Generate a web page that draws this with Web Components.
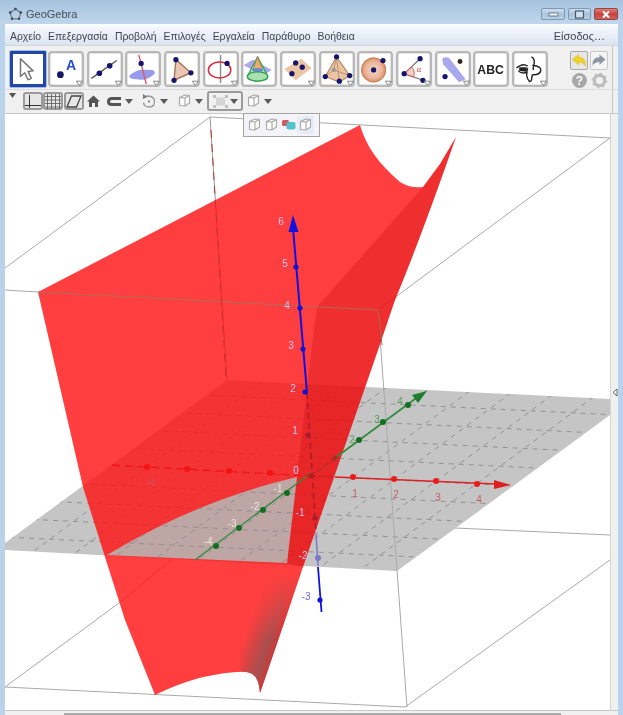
<!DOCTYPE html>
<html lang="el">
<head>
<meta charset="utf-8">
<title>GeoGebra</title>
<style>
  html, body { margin: 0; height: 100%; overflow: hidden; background: #b9d3ec; }
</style>
</head>
<body>
<gg-window>
  <gg-titlebar>GeoGebra</gg-titlebar>
  <gg-menubar>
    <span>Αρχείο</span><span>Επεξεργασία</span><span>Προβολή</span><span>Επιλογές</span><span>Εργαλεία</span><span>Παράθυρο</span><span>Βοήθεια</span>
    <span slot="end">Είσοδος…</span>
  </gg-menubar>
  <gg-toolbar>
    <gg-tool icon="move" selected></gg-tool>
    <gg-tool icon="point" menu></gg-tool>
    <gg-tool icon="line" menu></gg-tool>
    <gg-tool icon="perp" menu></gg-tool>
    <gg-tool icon="triangle" menu></gg-tool>
    <gg-tool icon="circle" menu></gg-tool>
    <gg-tool icon="cone"></gg-tool>
    <gg-tool icon="plane" menu></gg-tool>
    <gg-tool icon="pyramid" menu></gg-tool>
    <gg-tool icon="sphere" menu></gg-tool>
    <gg-tool icon="angle" menu></gg-tool>
    <gg-tool icon="reflect" menu></gg-tool>
    <gg-tool icon="abc"></gg-tool>
    <gg-tool icon="rotate" menu></gg-tool>
    <gg-actions slot="end"></gg-actions>
  </gg-toolbar>
  <gg-stylebar>
    <gg-style-btn icon="fold" width="7" gap="7"></gg-style-btn>
    <gg-style-btn icon="axes" width="20" pressed></gg-style-btn>
    <gg-style-btn icon="grid" width="20" gap="1" pressed></gg-style-btn>
    <gg-style-btn icon="para" width="20" gap="3" pressed></gg-style-btn>
    <gg-style-btn icon="home" width="13" gap="6"></gg-style-btn>
    <gg-style-btn icon="clip" width="27" gap="7" menu></gg-style-btn>
    <gg-style-btn icon="spin" width="28" gap="8" menu></gg-style-btn>
    <gg-style-btn icon="cube" width="27" gap="4" menu></gg-style-btn>
    <gg-style-btn icon="dots" width="36" gap="2" menu pressed></gg-style-btn>
    <gg-style-btn icon="cube" width="27" menu></gg-style-btn>
    <gg-popup></gg-popup>
  </gg-stylebar>
  <gg-main>
    <gg-view3d></gg-view3d>
  </gg-main>
</gg-window>

<script>
window.customElements.define('gg-window', class extends HTMLElement {
  constructor() {
    super();
    this.attachShadow({ mode: 'open' }).innerHTML = `<style>
  :host {
    display: flex;
    flex-direction: column;
    width: 623px;
    height: 715px;
    box-sizing: border-box;
    padding: 0 5px 0 5px;
    overflow: hidden;
    background: linear-gradient(#a6c3df 0, #c0d6ec 24px, #b9d3ec 24px);
    font-family: "Liberation Sans", sans-serif;
    filter: blur(.5px);
  }
</style>
<slot></slot>`;
  }
});

window.customElements.define('gg-titlebar', class extends HTMLElement {
  constructor() {
    super();
    this.attachShadow({ mode: 'open' }).innerHTML = `<style>
  :host {
    display: flex;
    align-items: center;
    flex: none;
    height: 24px;
    margin-right: -5px;
    padding: 4px 0 0 3px;
    box-sizing: border-box;
    font-size: 11px;
    color: #454e58;
  }
  svg.logo { margin-right: 3px; }
  .buttons { display: flex; gap: 3px; margin-left: auto; padding-right: 5px; }
  .buttons div {
    display: grid;
    place-items: center;
    width: 24px;
    height: 12px;
    border: 1px solid #7d97b0;
    border-radius: 2px;
    box-sizing: border-box;
    background: linear-gradient(#cfe0f0, #a9c3da 50%, #b8d0e6);
  }
  .buttons div:nth-child(2) { width: 23px; }
  .buttons .close { background: linear-gradient(#e0807a, #c8433c 50%, #d3625a); border-color: #8c4a48; }
</style>
<svg class="logo" width="15" height="15" viewBox="0 0 15 15">
  <path d="M7.5 2 L12.8 5.6 L11 11.8 L4 11.8 L2.2 5.6 Z" fill="none" stroke="#75808c" stroke-width="1.3"/>
  <circle cx="7.5" cy="2" r="1.3" fill="#3d4a58"/><circle cx="12.8" cy="5.6" r="1.3" fill="#3d4a58"/>
  <circle cx="11" cy="11.8" r="1.3" fill="#3d4a58"/><circle cx="4" cy="11.8" r="1.3" fill="#3d4a58"/>
  <circle cx="2.2" cy="5.6" r="1.3" fill="#3d4a58"/>
</svg>
<slot></slot>
<div class="buttons">
  <div><svg width="11" height="5"><rect x="1" y="1" width="9" height="3" fill="#eef4fa" stroke="#55687a" stroke-width=".8"/></svg></div>
  <div><svg width="11" height="9"><rect x="1.5" y="1" width="8" height="7" fill="#cfe0ef" stroke="#44576a" stroke-width="1.2"/></svg></div>
  <div class="close"><svg width="10" height="9"><path d="M2 1.5 L8 7.5 M8 1.5 L2 7.5" stroke="#fff" stroke-width="2"/></svg></div>
</div>`;
  }
});

window.customElements.define('gg-menubar', class extends HTMLElement {
  constructor() {
    super();
    this.attachShadow({ mode: 'open' }).innerHTML = `<style>
  :host {
    display: flex;
    align-items: center;
    flex: none;
    height: 22px;
    padding: 3px 13px 0 5px;
    box-sizing: border-box;
    gap: 7px;
    font-size: 10.4px;
    color: #3d4650;
    border-bottom: 1px solid #cfd6de;
    background: linear-gradient(#fff 0, #f3f7fb 4px, #d9e4f1 100%);
  }
  .end { margin-left: auto; font-size: 11px; }
</style>
<slot></slot><div class="end"><slot name="end"></slot></div>`;
  }
});

const DOT = '#15156e';
const dot = (x, y, r = 2.8, fill = DOT) => `<circle cx="${x}" cy="${y}" r="${r}" fill="${fill}"/>`;
const TOOL_ICONS = {
  move: `<path d="M9.5 5 L9.5 24 L14 20 L17.5 27.5 L21 26 L17.5 18.6 L23 18 Z" fill="#fff" stroke="#777" stroke-width="1.6" stroke-linejoin="round"/>`,
  point: `${dot(11.5, 22, 3.6)}<text x="23" y="17" text-anchor="middle" font-size="15" font-weight="bold" fill="#2250c8">A</text>`,
  line: `<path d="M3 26 L30 7" stroke="#555" stroke-width="1.4"/>${dot(11.5, 20.5, 3)}${dot(22.5, 12.5, 3)}`,
  perp: `<path d="M3 23 Q12 15 22 17 Q31 16 30 21 Q22 29 11 27 Q2 27 3 23Z" fill="#9a9aec"/><path d="M13 1 L21 32" stroke="#d85a6a" stroke-width="1.5"/>${dot(15.5, 10, 2.8)}`,
  triangle: `<path d="M11 6 L27 20 L9 28 Z" fill="#ecc6b4" stroke="#a4775a" stroke-width="1.5"/>${dot(11, 6)}${dot(27, 20)}${dot(9, 28)}`,
  circle: `<path d="M17 1 L17 31" stroke="#888" stroke-width="1.5"/><ellipse cx="16" cy="17" rx="12" ry="8.5" fill="none" stroke="#d92b3a" stroke-width="1.6"/>${dot(24, 10)}`,
  cone: `<path d="M1 12 L11 6 L31 17 L22 23Z" fill="#a8a8ec"/><path d="M16 3 L27 24 A11 5 0 0 1 5 24Z" fill="#a8e0b0" stroke="#2e9e4e" stroke-width="1.2"/><path d="M16 3 L21 17 L11 17Z" fill="#e8b070" stroke="#c26a4a" stroke-width=".8"/><ellipse cx="16" cy="17" rx="6" ry="2" fill="#6a8ad8"/><ellipse cx="16" cy="24" rx="11" ry="5" fill="none" stroke="#2e9e4e" stroke-width="1.2"/>`,
  plane: `<path d="M3 16 L21 5 L32 15 L15 28Z" fill="#ecc6a4"/>${dot(15, 9.5)}${dot(11, 21)}${dot(22, 14)}`,
  pyramid: `<path d="M17 3 L31 23 L20 30 L5 24Z" fill="#ecc4a2" stroke="#b08a6a" stroke-width="1.2"/><path d="M17 3 L20 30 M17 3 L14 17 M5 24 L14 17 L31 23" fill="none" stroke="#b08a6a" stroke-width=".9"/>${dot(17, 3)}${dot(31, 23)}${dot(20, 29)}${dot(5, 24)}<circle cx="14" cy="17" r="2.3" fill="#999"/>`,
  sphere: `<defs><radialGradient id="sph"><stop offset="0" stop-color="#f4d8c8"/><stop offset=".7" stop-color="#eab49a"/><stop offset="1" stop-color="#d88a60"/></radialGradient></defs><circle cx="16" cy="17" r="13" fill="url(#sph)" stroke="#c77a4a"/>${dot(16, 17)}${dot(26, 7)}`,
  angle: `<path d="M24 5 L7 21 L27 28" fill="none" stroke="#777" stroke-width="1.3"/><path d="M15 14 A10 10 0 0 1 17 24.5 L7 21Z" fill="#f2cfc4" stroke="#d25050" stroke-width="1"/><text x="20.5" y="19" font-size="8" fill="#e03030">α</text>${dot(24, 5)}${dot(7, 21)}${dot(27, 28)}`,
  reflect: `<path d="M6 5 Q10 2 14 5 L31 27 L24 30 L7 11Z" fill="#a8a8ec"/>${dot(25, 8, 2.6, '#3a2020')}${dot(9, 24)}`,
  abc: `<text x="17" y="21" text-anchor="middle" font-size="13" font-weight="bold" fill="#222">ABC</text>`,
  rotate: `<path d="M3 15 Q10 9 15 13 M15 19 Q9 22 5 18 M19 3 Q24 5 21 14 L21 17 M17 29 Q12 25 15 15 M20 12 Q30 13 29 18 Q27 23 20 22 M20 22 L19 28 Q18 30 16 29" fill="none" stroke="#222" stroke-width="1.5"/><path d="M6 14 L14 14 L14 19 L6 18Z" fill="#222"/>`,
};

const RIGHT_RULE = 'linear-gradient(90deg, #f0f0f0 607px, #c6c6c6 607px, #c6c6c6 608px, #f0f0f0 608px)';

window.customElements.define('gg-toolbar', class extends HTMLElement {
  constructor() {
    super();
    this.attachShadow({ mode: 'open' }).innerHTML = `<style>
  :host {
    display: flex;
    flex: none;
    height: 44px;
    padding: 5px 10px 0 4.5px;
    box-sizing: border-box;
    gap: 2.65px;
    background: ${RIGHT_RULE};
    border-bottom: 1px solid #dcdcdc;
  }
  .end { margin-left: auto; }
</style>
<slot></slot><div class="end"><slot name="end"></slot></div>`;
  }
});

window.customElements.define('gg-tool', class extends HTMLElement {
  constructor() {
    super();
    this.attachShadow({ mode: 'open' }).innerHTML = `<style>
  :host {
    display: block;
    flex: none;
    width: 36px;
    height: 36px;
    box-sizing: border-box;
    padding: 1px;
    border: 2px solid #b8b8b8;
    border-radius: 4px;
    background: #e4e4e4;
    font-family: "Liberation Sans", sans-serif;
  }
  :host([selected]) {
    padding: 0;
    border: 3px solid #2447a6;
    border-radius: 1px;
    background: #fff;
    box-shadow: 0 0 0 1px #9fc0e4;
  }
  svg { display: block; width: 30px; height: 30px; background: #fff; overflow: visible; }
</style>
<svg viewBox="1.5 0 32 32"></svg>`;
    this.svg = this.shadowRoot.querySelector('svg');
  }

  connectedCallback() {
    const arrow = this.hasAttribute('menu')
      ? '<path d="M28.5 29 L35 29 L31.7 33.5 Z" fill="#fff" stroke="#808080" stroke-width="1"/>'
      : '';
    this.svg.innerHTML = TOOL_ICONS[this.getAttribute('icon')] + arrow;
  }
});

window.customElements.define('gg-actions', class extends HTMLElement {
  constructor() {
    super();
    this.attachShadow({ mode: 'open' }).innerHTML = `<style>
  :host {
    display: grid;
    grid-template-columns: 18px 18px;
    gap: 2px 2px;
    justify-items: center;
  }
  .btn { width: 18px; height: 19px; box-sizing: border-box; border: 1px solid #c8c8c8; border-radius: 2px; background: #f4f4f4; }
  .btn.on { background: #e6e6e6; border-color: #a8a8a8; }
  svg { display: block; }
</style>
<div class="btn on"><svg width="16" height="17" viewBox="0 0 17 17"><path d="M1.5 7.5 L8 2 L8 5 Q16 5 15.5 14 Q13 10 8 10 L8 13 Z" fill="#f2d325" stroke="#d8b61c" stroke-width=".6"/></svg></div>
<div class="btn"><svg width="16" height="17" viewBox="0 0 17 17"><path d="M15.5 7.5 L9 2 L9 5 Q1 5 1.5 14 Q4 10 9 10 L9 13 Z" fill="#8d98a4"/></svg></div>
<svg width="17" height="17" viewBox="0 0 17 17"><circle cx="8.5" cy="8.5" r="7.5" fill="#a8a8a8"/><text x="8.5" y="13" text-anchor="middle" font-size="12" font-weight="bold" fill="#fff" font-family="Liberation Sans, sans-serif">?</text></svg>
<svg width="17" height="17" viewBox="0 0 17 17"><circle cx="8.5" cy="8.5" r="5.2" fill="none" stroke="#bcbcbc" stroke-width="3.2"/><circle cx="8.5" cy="8.5" r="7" fill="none" stroke="#c4c4c4" stroke-width="1.8" stroke-dasharray="2.4 3.1"/></svg>`;
  }
});

const CUBE = (stroke = '#a8a8a8') => `<path d="M3.5 5.5 L9 3 L13.5 3.5 L13.5 11 L9 14 L3.5 13.5 Z M3.5 5.5 L9 6 L13.5 3.5 M9 6 L9 14" fill="#fbfbfb" stroke="${stroke}" stroke-width="1.1" stroke-linejoin="round"/>`;
const STYLE_ICONS = {
  fold: `<path d="M0 1 L7 1 L3.5 6Z" fill="#555"/>`,
  axes: `<path d="M4.5 1 L4.5 14 M0 11.5 L16 11.5" stroke="#333" stroke-width="1"/>`,
  grid: `<path d="M2.5 0V15M6.5 0V15M10.5 0V15M14.5 0V15M0 2.5H16M0 6H16M0 9.5H16M0 13H16" stroke="#555" stroke-width=".8"/>`,
  para: `<path d="M1 13 L5.5 2 L15 2 L10.5 13Z" fill="none" stroke="#444" stroke-width="1.3"/>`,
  home: `<path d="M6.5 3.5 L13 9.5 L11 9.5 L11 15 L8 15 L8 11 L5 11 L5 15 L2 15 L2 9.5 L0 9.5Z" fill="#555"/>`,
  clip: `<path d="M15 6.5 L6 6.5 Q2.5 6.5 2.5 9.5 Q2.5 12.5 6 12.5 L15 12.5" fill="none" stroke="#555" stroke-width="3"/>`,
  spin: `<path d="M4 4.5 L8 4 Q14.5 4.5 14.5 9.5 Q14.5 15 9 15 Q4 15 3.5 10.5" fill="none" stroke="#999" stroke-width="1.4"/><path d="M3 2 L7 5 L3 7Z" fill="#777"/><circle cx="9" cy="9.5" r="1" fill="#666"/>`,
  cube: `<g>${CUBE()}</g>`,
  dots: `<rect x="5" y="3.5" width="9" height="8" fill="#d4d4d4"/><g fill="#c0c0c0"><rect x="2" y="1" width="3" height="3"/><rect x="14" y="1" width="3" height="3"/><rect x="2" y="11" width="3" height="3"/><rect x="14" y="11" width="3" height="3"/></g>`,
};
const STYLE_BOX = { axes: [16, 15], grid: [16, 15], para: [16, 15], fold: [7, 18], home: [13, 18], clip: [17, 18], spin: [17, 18], cube: [17, 18], dots: [19, 15] };

window.customElements.define('gg-stylebar', class extends HTMLElement {
  constructor() {
    super();
    this.attachShadow({ mode: 'open' }).innerHTML = `<style>
  :host {
    display: flex;
    position: relative;
    align-items: center;
    flex: none;
    height: 24px;
    padding: 0 0 1px 4px;
    box-sizing: border-box;
    background: ${RIGHT_RULE};
    border-bottom: 1px solid #c9c9c9;
    z-index: 1;
  }
</style>
<slot></slot>`;
  }
});

window.customElements.define('gg-style-btn', class extends HTMLElement {
  constructor() {
    super();
    this.attachShadow({ mode: 'open' }).innerHTML = `<style>
  :host {
    display: flex;
    align-items: center;
    justify-content: space-between;
    flex: none;
    height: 18px;
    box-sizing: border-box;
  }
  :host([pressed]) {
    border: 2px solid #9a9a9a;
    border-radius: 3px;
    background: #e6e6e6;
  }
  :host([icon="dots"]) { padding: 0 4px 0 2px; height: 20px; background: #f0f0f0; }
  svg { display: block; flex: none; }
  .arrow { width: 8px; height: 5px; }
</style>`;
  }

  connectedCallback() {
    const name = this.getAttribute('icon');
    this.style.width = `${this.getAttribute('width')}px`;
    this.style.marginRight = `${this.getAttribute('gap') || 0}px`;
    const [w, h] = STYLE_BOX[name];
    const arrow = this.hasAttribute('menu')
      ? '<svg class="arrow" viewBox="0 0 8 5"><path d="M0 0 L8 0 L4 5Z" fill="#5a5a5a"/></svg>'
      : '';
    this.shadowRoot.innerHTML += `<svg width="${w}" height="${h}" viewBox="0 0 ${w} ${h}">${STYLE_ICONS[name]}</svg>${arrow}`;
  }
});

window.customElements.define('gg-popup', class extends HTMLElement {
  constructor() {
    super();
    this.attachShadow({ mode: 'open' }).innerHTML = `<style>
  :host {
    display: flex;
    position: absolute;
    left: 238px;
    top: 23px;
    width: 77px;
    height: 24px;
    box-sizing: border-box;
    align-items: center;
    padding-left: 2px;
    border: 1px solid #a4a4a4;
    background: #f4f4f8;
  }
  svg { display: block; width: 17px; height: 18px; flex: none; }
  .on { background: #e6ecf8; }
</style>
<svg viewBox="0 0 17 18">${CUBE()}</svg>
<svg viewBox="0 0 17 18">${CUBE()}</svg>
<svg viewBox="0 0 17 18"><rect x="2" y="4" width="7" height="6" rx="1.5" fill="#c95a62"/><rect x="6.5" y="6" width="9" height="7.5" rx="2" fill="#4fc4cc"/></svg>
<svg class="on" viewBox="0 0 17 18">${CUBE()}</svg>`;
  }
});

window.customElements.define('gg-main', class extends HTMLElement {
  constructor() {
    super();
    this.attachShadow({ mode: 'open' }).innerHTML = `<style>
  :host {
    display: flex;
    flex: 1;
    flex-direction: column;
    min-height: 0;
    background: #f0f0f0;
  }
  .row { display: flex; flex: 1; min-height: 0; }
  .side {
    display: flex;
    align-items: center;
    justify-content: center;
    flex: none;
    width: 8px;
    border-left: 1px solid #d4d4d4;
    box-sizing: border-box;
    padding: 0 0 40px;
  }
  .bottom { flex: none; height: 5px; border-top: 1px solid #c9c9c9; box-sizing: border-box; padding: 2px 57px 0 59px; }
  .bottom div { height: 3px; background: #a9a9a9; }
</style>
<div class="row">
  <slot></slot>
  <div class="side"><svg width="6" height="9" viewBox="0 0 6 9"><path d="M5 1 L1 4.5 L5 8Z" fill="#fff" stroke="#666"/></svg></div>
</div>
<div class="bottom"><div></div></div>`;
  }
});

window.customElements.define('gg-view3d', class extends HTMLElement {
  constructor() {
    super();

    const O = [311, 476];
    const ux = [41.3, 2];
    const uy = [24, -17.8];
    const at = (i, j) => `${O[0] + i * ux[0] + j * uy[0]} ${O[1] + i * ux[1] + j * uy[1]}`;
    let grid = '';
    for (let k = -7; k <= 7; k += 1) {
      grid += `<path d="M${at(-12, k)} L${at(12, k)}"/><path d="M${at(k, -12)} L${at(k, 12)}"/>`;
    }

    const surface = `M38 292 L360 125 C366 146 378 163 400 182 C408 187 416 188 423 187 L440 164 L456 137
      Q420 240 395 300 L378 350 L303 567 L285 620 L260 693 Q259 676 250 673 Q240 669 199 678 Q175 685 155 695
      L125 620 L105 557 L83 487 Z`;

    const label = (x, y, text, fill) => `<text x="${x}" y="${y}" fill="${fill}" text-anchor="middle">${text}</text>`;
    const zDots = [[296, 267], [300, 308], [303, 349], [305, 392], [320, 600]];

    this.attachShadow({ mode: 'open' }).innerHTML = `<style>
  :host {
    display: block;
    flex: 1;
    min-width: 0;
    background: #fff;
    overflow: hidden;
  }
  svg { display: block; width: 100%; height: 100%; font-family: "Liberation Sans", sans-serif; font-size: 10px; }
  .box { stroke: #a9a9a9; stroke-width: 1; fill: none; }
  .grid { stroke: #8c8c8c; stroke-width: .9; stroke-dasharray: 5 5; fill: none; }
</style>
<svg viewBox="5 114 605 596" preserveAspectRatio="none">
  <defs>
    <clipPath id="plane"><path d="M227 380 L610 399 L610 415 L397 571 L5 550 L5 543 Z"/></clipPath>
    <clipPath id="pink"><path d="M107 555 Q198 500 297 477 L287 563 Z"/></clipPath>
    <clipPath id="surface"><path d="${surface}"/></clipPath>
    <linearGradient id="shade" gradientUnits="userSpaceOnUse" x1="246" y1="632" x2="283" y2="644">
      <stop offset="0" stop-color="#a04a4a" stop-opacity="0"/>
      <stop offset=".62" stop-color="#a85050"/>
      <stop offset="1" stop-color="#e42a2a"/>
    </linearGradient>
    <linearGradient id="fade" gradientUnits="userSpaceOnUse" x1="0" y1="572" x2="0" y2="640">
      <stop offset="0" stop-color="#000"/>
      <stop offset="1" stop-color="#fff"/>
    </linearGradient>
    <mask id="shadeMask" maskUnits="userSpaceOnUse" x="240" y="564" width="80" height="136">
      <rect x="240" y="564" width="80" height="136" fill="url(#fade)"/>
    </mask>
  </defs>

  <path class="box" d="M5 268 L210 117 L610 138 L378 310 M5 687 L405 707 L610 560 M455 528 L610 535 M119 603 L171 560 M5 687 L119 603 M5 290 L38 292"/>
  <path d="M210 117 L227 380" stroke="#999" stroke-width="1" fill="none"/>

  <path d="M227 380 L610 399 L610 415 L397 571 L5 550 L5 543 Z" fill="#c5c5c5"/>
  <g clip-path="url(#plane)"><g class="grid">${grid}</g></g>

  <path d="M378 310 L407 707" class="box" stroke="#999"/>

  <path d="${surface}" fill="#ff1313" fill-opacity=".81"/>
  <path d="M423 187 L440 164 L456 137 Q420 240 395 300 L378 350 L303 567 L287 563 L297 477 L312 345 L317 307 Z" fill="#be0000" fill-opacity=".25"/>

  <path d="M107 555 Q198 500 297 477 L287 563 Z" fill="#bea6a4"/>
  <g clip-path="url(#pink)"><g class="grid">${grid}</g></g>

  <g clip-path="url(#surface)">
    <path d="M240 564 L320 564 L320 700 L240 700 Z" fill="url(#shade)" mask="url(#shadeMask)"/>
  </g>

  <path d="M38 292 L378 310 L382 345" stroke="#b06a5a" stroke-width="1" fill="none"/>
  <path d="M211 130 L226 378" stroke="#c63030" stroke-width="1" stroke-dasharray="8 6" fill="none"/>

  <!-- y axis -->
  <path d="M195 560 L311 473" stroke="#2e8b3a" stroke-width="1.4"/>
  <path d="M311 476 L335 458" stroke="#a83030" stroke-width="1.4" stroke-dasharray="5 3"/>
  <path d="M335 458 L419 396" stroke="#2e8b3a" stroke-width="1.6"/>
  <path d="M427 391 L412 395 L418 403 Z" fill="#1e7e2e"/>
  ${[[287, 493], [263, 510], [239, 528], [216, 546], [359, 440], [383, 422], [408, 405]].map(([x, y]) => dot(x, y, 3, '#146e22')).join('')}
  ${dot(335, 458, 2.6, '#a03028')}

  <!-- x axis -->
  <path d="M112 465 L311 476" stroke="#f01818" stroke-width="1.4" stroke-dasharray="8 5"/>
  <path d="M311 476 L335 477" stroke="#c81e1e" stroke-width="1.4" stroke-dasharray="5 3"/>
  <path d="M335 477 L496 484" stroke="#e02020" stroke-width="1.4"/>
  <path d="M511 485 L494 480 L494 489 Z" fill="#e02020"/>
  ${[[147, 467], [187, 469], [229, 471], [270, 473]].map(([x, y]) => dot(x, y, 3, '#f01414')).join('')}
  ${[[353, 477], [394, 479], [436, 481], [477, 484]].map(([x, y]) => dot(x, y, 3, '#e81c1c')).join('')}
  ${dot(311, 476, 2.6, '#b81c1c')}

  <!-- z axis -->
  <path d="M293 228 L307 393" stroke="#1212e0" stroke-width="2"/>
  <path d="M293 215 L288.5 232 L298.5 232 Z" fill="#1212e0"/>
  <path d="M307 393 L316 532" stroke="#a81c2c" stroke-width="1.5" stroke-dasharray="6 4"/>
  ${dot(308, 435, 2.6, '#a81c2c')}
  ${dot(315, 518, 2.6, '#a81c2c')}
  <path d="M316 534 L318 566" stroke="#7a7ad0" stroke-width="1.5"/>
  ${dot(318, 558, 3, '#7a7ac8')}
  <path d="M318 567 L321.5 612" stroke="#1212e0" stroke-width="1.8"/>
  ${zDots.map(([x, y]) => dot(x, y, 2.6, '#1212d0')).join('')}

  <!-- labels -->
  ${[[355, 497, '1'], [396, 498, '2'], [438, 501, '3'], [479, 503, '4']].map(([x, y, t]) => label(x, y, t, '#c05a6a')).join('')}
  ${label(151, 486, '-4', '#d05060')}
  ${[[400, 405, '4'], [377, 423, '3'], [352, 443, '2']].map(([x, y, t]) => label(x, y, t, '#5a9a60')).join('')}
  ${[[278, 492, '-1'], [255, 510, '-2'], [232, 527, '-3'], [208, 545, '-4']].map(([x, y, t]) => label(x, y, t, '#e4e8e0')).join('')}
  ${[[281, 225, '6'], [285, 267, '5'], [287, 309, '4'], [291, 349, '3'], [293, 392, '2'], [295, 434, '1'], [296, 474, '0'], [300, 516, '-1'], [303, 559, '-2']].map(([x, y, t]) => label(x, y, t, '#c9c4f4')).join('')}
  ${label(306, 600, '-3', '#6a6ae0')}
</svg>`;
  }
});
</script>
</body>
</html>
